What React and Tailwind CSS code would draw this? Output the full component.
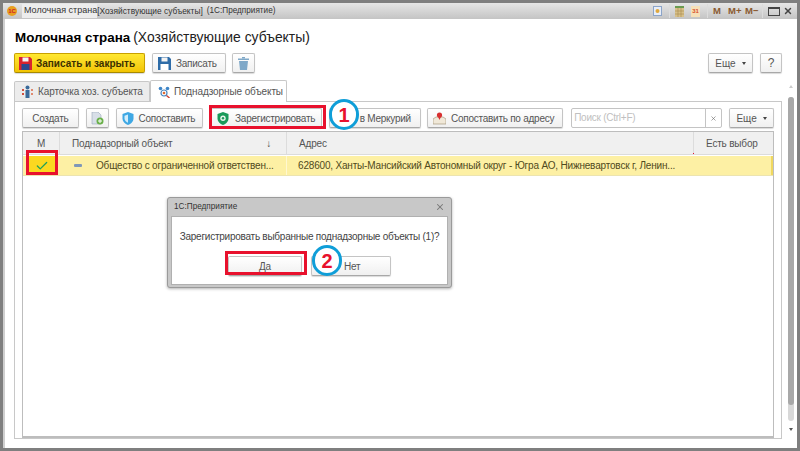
import React from "react";
import { X, Check } from "lucide-react";

const font = { fontFamily: '"Liberation Sans", Arial, sans-serif' };

function Btn({ className = "", yellow = false, children }) {
  const tone = yellow
    ? "border-[#c8a000] border-b-[#a88a00] from-[#ffe830] to-[#f2c400] text-[#3c3000]"
    : "border-[#c4c4c4] border-b-[#a8a8a8] from-white to-[#f0f0f0] text-[#555]";
  return (
    <div className={`flex items-center rounded-[2px] border bg-gradient-to-b whitespace-nowrap shadow-[0_1px_1px_rgba(0,0,0,0.15)] ${tone} ${className}`}>
      {children}
    </div>
  );
}

function SaveIcon({ color = "#2e6ca8", label = "#fff" }) {
  return (
    <svg width="13" height="13" viewBox="0 0 13 13">
      <path d="M0 0h11l2 2v11H0z" fill={color} />
      <rect x="3.5" y="0.5" width="6" height="4" fill="#f4f4f4" />
      <rect x="2.5" y="7" width="8" height="6" fill={label} />
    </svg>
  );
}

function Shield({ fill, light, ring }) {
  return (
    <svg width="12" height="13" viewBox="0 0 12 13">
      <path d="M6 0l5.5 2v4.5C11.5 9.5 9 12 6 13 3 12 .5 9.5.5 6.5V2z" fill={fill} />
      {light && <path d="M6 2.5L2.5 3.8v2.7C2.5 8.300 4 10 6 10.800z" fill={light} />}
      {ring && <circle cx="6" cy="6.300" r="2.700" fill={ring} />}
      {ring && <circle cx="6" cy="6.300" r="1.200" fill={fill} />}
    </svg>
  );
}

function Caret() {
  return <span className="ml-[6px] h-0 w-0 border-x-[2.5px] border-t-[3px] border-x-transparent border-t-[#444]" />;
}

function Divider() {
  return <span className="block h-[14px] w-px bg-[#dcdcdc]" />;
}

function CircleNum({ n, className }) {
  return (
    <div className={`absolute flex h-[31px] w-[30px] items-center justify-center rounded-full border-[3px] border-[#0f9ed8] bg-white text-[20px] leading-none font-bold text-[#e8112d] ${className}`}>
      {n}
    </div>
  );
}

export default function App() {
  return (
    <div style={font} className="relative h-[451px] w-[800px] overflow-hidden border-[3px] border-[#7f7f7f] bg-white text-[#555]">
      {/* заголовок окна */}
      <div className="flex h-[16px] items-center bg-gradient-to-b from-[#e6e6e6] to-[#c4c4c4] pr-[4px] pl-[4px]">
        <div className="flex h-[10px] w-[10px] items-center justify-center rounded-full bg-[#e8a020]">
          <span className="text-[6px] leading-none font-bold text-[#d0202a]">1C</span>
        </div>
        <span className="ml-[5px] bg-[#ededed] pl-[2px] text-[9px] whitespace-nowrap text-[#333]">Молочная страна</span>
        <span className="text-[8.4px] whitespace-nowrap text-[#333]">[Хозяйствующие субъекты]</span>
        <span className="ml-[4px] text-[8.2px] whitespace-nowrap text-[#333]">(1С:Предприятие)</span>
        <div className="ml-auto flex items-center">
          <svg width="9" height="10" viewBox="0 0 9 10"><rect x="0.5" y="0.5" width="8" height="9" fill="#e8eef8" stroke="#8ca4c8" /><circle cx="4.5" cy="5" r="2" fill="#e0a83c" /></svg>
          <span className="mr-[5px] ml-[7px]"><Divider /></span>
          <svg width="9" height="11" viewBox="0 0 9 11"><rect width="9" height="11" fill="#d8c088" /><rect width="9" height="2" fill="#6a9a50" /><path d="M3 2v9M6 2v9M0 5h9M0 8h9" stroke="#a88c50" strokeWidth="0.6" /></svg>
          <div className="ml-[7px] flex h-[11px] w-[9px] items-center justify-center bg-[#f6e0b8] text-[6px] leading-none font-bold text-[#d8502a]">31</div>
          <span className="mr-[5px] ml-[7px]"><Divider /></span>
          <span className="w-[8px] text-[9.5px] leading-none font-bold text-[#8a5a30]">М</span>
          <span className="ml-[7px] w-[13px] text-[9.5px] leading-none font-bold whitespace-nowrap text-[#8a5a30]">М+</span>
          <span className="ml-[4px] w-[12px] text-[9.5px] leading-none font-bold whitespace-nowrap text-[#8a5a30]">М−</span>
          <span className="mr-[5px] ml-[5px]"><Divider /></span>
          <span className="h-[9px] w-[12px] border border-t-2 border-[#444]" />
          <X className="ml-[3px] text-[#444]" size={10} strokeWidth={3.5} />
        </div>
      </div>

      {/* форма */}
      <div className="flex h-[429px] border-l-2 border-[#cfcfcf] pr-[3px] pl-[9px]">
        <div className="flex w-[768px] shrink-0 flex-col">
          <div className="pt-[9px] pl-[1px] leading-[18px] whitespace-nowrap text-black">
            <span className="text-[13.4px] font-bold">Молочная страна</span>
            <span className="ml-[3px] text-[13.9px] text-[#222]">(Хозяйствующие субъекты)</span>
          </div>

          <div className="mt-[6px] flex h-[20px] items-stretch text-[10px] tracking-[-0.25px]">
            <Btn yellow className="w-[131px] pl-[4px] font-bold tracking-normal">
              <SaveIcon color="#d9232e" label="#2a4a90" />
              <span className="ml-[4px]">Записать и закрыть</span>
            </Btn>
            <Btn className="ml-[7px] w-[74px] pl-[5px]">
              <SaveIcon />
              <span className="ml-[5px]">Записать</span>
            </Btn>
            <Btn className="ml-[6px] w-[23px] justify-center">
              <svg width="11" height="13" viewBox="0 0 11 13"><path d="M0 1.500h11v1.500H0zM1 4h9l-1 9H2z" fill="#7fa8c8" /><path d="M4 0h3v1.500H4z" fill="#7fa8c8" /></svg>
            </Btn>
            <Btn className="ml-auto w-[45px] justify-center tracking-normal">
              Еще<Caret />
            </Btn>
            <Btn className="ml-[7px] w-[22px] justify-center text-[12px]">?</Btn>
          </div>

          {/* вкладки */}
          <div className="mt-[7px] flex h-[21px] items-end text-[10px] tracking-[-0.1px]">
            <div className="flex h-[20px] w-[136px] items-center rounded-t-[2px] border border-b-0 border-[#c8c8c8] bg-[#ececec] pl-[7px] whitespace-nowrap">
              <svg width="11" height="13" viewBox="0 0 11 13"><circle cx="5.500" cy="2.500" r="2" fill="#3a6a9a" /><path d="M3.500 5h4v8h-4z" fill="#3a6a9a" /><path d="M0 4h2v2H0zM0 8h2v2H0z" fill="#d05040" /><path d="M9 4h2v2H9zM9 8h2v2H9z" fill="#e08a70" /></svg>
              <span className="ml-[5px]">Карточка хоз. субъекта</span>
            </div>
            <div className="relative z-10 -mb-px flex h-[22px] w-[137px] items-center rounded-t-[2px] border border-b-0 border-[#c8c8c8] bg-white pl-[7px] whitespace-nowrap">
              <svg width="12" height="12" viewBox="0 0 12 12"><circle cx="2.500" cy="2.500" r="1.800" fill="#3f86c8" /><circle cx="9.500" cy="2.500" r="1.800" fill="#3f86c8" /><circle cx="6" cy="7" r="3" fill="none" stroke="#4a86c0" strokeWidth="1.200" /><circle cx="6" cy="7" r="1.300" fill="#e06a30" /><path d="M8.500 9.500l3 2.500" stroke="#d04030" strokeWidth="1.400" /></svg>
              <span className="ml-[4px]">Поднадзорные объекты</span>
            </div>
          </div>

          {/* панель вкладки */}
          <div className="mb-[9px] flex min-h-0 flex-1 flex-col border border-[#c8c8c8] px-[7px] pt-[6px]">
            <div className="flex h-[20px] items-stretch text-[10px] tracking-[-0.25px]">
              <Btn className="w-[57px] justify-center">Создать</Btn>
              <Btn className="ml-[7px] w-[23px] justify-center">
                <svg width="13" height="13" viewBox="0 0 13 13"><path d="M1 0h6l3 3v9H1z" fill="#d8dfe8" stroke="#9aa8b8" strokeWidth="0.6" /><circle cx="9" cy="9" r="3.500" fill="#6ab04a" /><path d="M7 9h4M9 7v4" stroke="#fff" /></svg>
              </Btn>
              <Btn className="ml-[7px] w-[88px] pl-[5px]">
                <Shield fill="#3fa8e4" light="#d4eefb" />
                <span className="ml-[5px]">Сопоставить</span>
              </Btn>
              <Btn className="ml-[8px] w-[112px] pl-[5px]">
                <Shield fill="#1a9a5a" ring="#e8f4ec" />
                <span className="ml-[6px]">Зарегистрировать</span>
              </Btn>
              <Btn className="ml-[7px] w-[92px] justify-end pr-[9px]">в Меркурий</Btn>
              <Btn className="ml-[6px] w-[137px] pl-[5px]">
                <svg width="13" height="13" viewBox="0 0 13 13"><path d="M0 7l3-2h7l3 2v5H0z" fill="#f0e8d8" stroke="#a89a80" strokeWidth="0.7" /><circle cx="6.500" cy="3" r="2.600" fill="#d83030" /><path d="M5 4.500L6.500 8 8 4.500z" fill="#d83030" /></svg>
                <span className="ml-[5px]">Сопоставить по адресу</span>
              </Btn>
              <div className="ml-[8px] flex w-[152px] items-stretch rounded-[2px] border border-[#c4c4c4] bg-white">
                <span className="flex-1 pl-[2px] leading-[18px] whitespace-nowrap text-[#c0c0c0]">Поиск (Ctrl+F)</span>
                <div className="flex w-[16px] items-center justify-center border-l border-[#c4c4c4]">
                  <X size={7} strokeWidth={2} className="text-[#666]" />
                </div>
              </div>
              <Btn className="ml-[7px] w-[45px] justify-center tracking-normal">
                Еще<Caret />
              </Btn>
            </div>

            {/* таблица */}
            <div className="mt-[3px] flex min-h-0 flex-1 flex-col border border-b-2 border-[#bdbdbd] text-[10px] tracking-[-0.18px]">
              <div className="flex h-[23px] items-stretch border-b border-[#dcdcdc] bg-[#f0f0f0] whitespace-nowrap">
                <div className="flex w-[37px] items-center justify-center border-r border-[#dcdcdc]">М</div>
                <div className="flex w-[227px] items-center border-r border-[#dcdcdc] pl-[12px]">
                  <span>Поднадзорный объект</span>
                  <span className="mr-[15px] ml-auto text-[#444]">↓</span>
                </div>
                <div className="flex w-[406px] items-center pl-[12px]">Адрес</div>
                <div className="relative flex flex-1 items-center border-l border-[#dcdcdc] pl-[12px]">
                  Есть выбор
                  <span className="absolute bottom-0 -left-px h-px w-px bg-[#e8112d]" />
                </div>
              </div>
              <div className="mt-px flex h-[20px] items-stretch border-b border-[#ece4b0] bg-[#fdf0a4] text-[#504a20]">
                <div className="flex w-[37px] justify-start pl-[6px]">
                  <div className="flex w-[26px] items-center justify-center bg-[#fbd820]">
                    <Check size={14} strokeWidth={2.2} className="text-[#1ea05a]" />
                  </div>
                </div>
                <div className="flex w-[227px] items-center border-r border-[#fff8d0] pl-[14px] whitespace-nowrap">
                  <span className="h-[3px] w-[8px] rounded-[1px] bg-[#7f98b8]" />
                  <span className="ml-[14px]">Общество с ограниченной ответствен...</span>
                </div>
                <div className="flex flex-1 items-center border-r-2 border-[#f0d860] pl-[11px] whitespace-nowrap">
                  628600, Ханты-Мансийский Автономный округ - Югра АО, Нижневартовск г, Ленин...
                </div>
              </div>
            </div>
          </div>
        </div>

        {/* полоса прокрутки */}
        <div className="ml-[6px] flex w-[6px] shrink-0 flex-col items-center pt-[66px]">
          <span className="h-0 w-0 border-x-[2.5px] border-b-[3px] border-x-transparent border-b-[#ccc]" />
          <div className="mt-[9px] h-[324px] w-[6px] rounded-[3px] bg-[#d8d8d8]">
            <div className="h-[308px] rounded-[3px] bg-[#a8a8a8]" />
          </div>
          <span className="mt-[7px] h-0 w-0 border-x-[2.5px] border-t-[3px] border-x-transparent border-t-[#555]" />
        </div>
      </div>

      {/* выделения на скриншоте */}
      <div className="absolute top-[102px] left-[206px] h-[24px] w-[117px] border-[3px] border-[#e8112d]" />
      <CircleNum n="1" className="top-[96px] left-[326px]" />
      <div className="absolute top-[147px] left-[23px] h-[25px] w-[32px] border-[3px] border-[#e8112d]" />

      {/* диалог */}
      <div className="absolute top-[194px] left-[164px] h-[91px] w-[285px] rounded-[3px] border border-[#9a9a9a] bg-[#c8c8c8] px-[3px] shadow-[0_1px_3px_rgba(0,0,0,0.3)]">
        <div className="flex h-[18px] items-center justify-between pr-[3px] pl-[3px] text-[8.2px] whitespace-nowrap text-[#333]">
          <span>1С:Предприятие</span>
          <X size={10} strokeWidth={2.5} className="text-[#777]" />
        </div>
        <div className="flex h-[69px] flex-col items-center border border-[#b0b0b0] bg-white pt-[12px] text-[10px] tracking-[-0.25px] text-[#444]">
          <div className="whitespace-nowrap">Зарегистрировать выбранные поднадзорные объекты (1)?</div>
          <div className="mt-[12px] flex items-stretch">
            <Btn className="h-[20px] w-[74px] justify-center">Да</Btn>
            <Btn className="ml-[9px] h-[20px] w-[80px] justify-start pl-[32px]">Нет</Btn>
          </div>
        </div>
      </div>
      <div className="absolute top-[248px] left-[222px] h-[24px] w-[82px] border-[3px] border-[#e8112d]" />
      <CircleNum n="2" className="top-[242px] left-[309px]" />
    </div>
  );
}
